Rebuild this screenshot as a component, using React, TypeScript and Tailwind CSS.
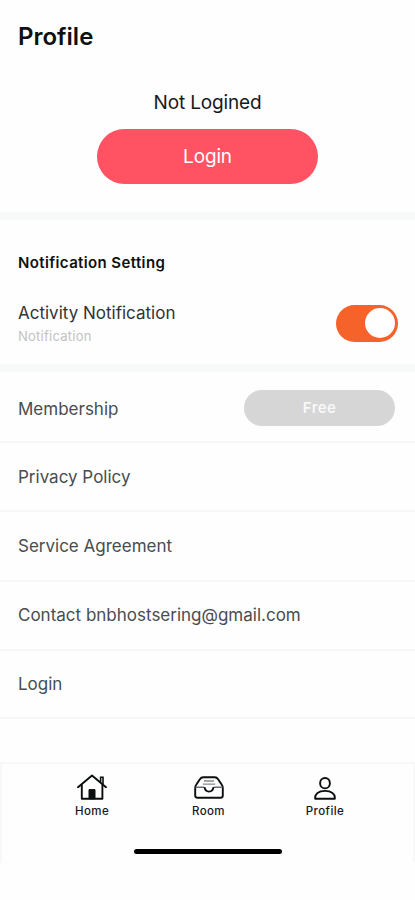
import { useState } from "react";

const HomeIcon = () => (
  <svg width="30" height="26" viewBox="0 0 30 26" fill="none" stroke="#0b0f10" strokeWidth="1.9">
    <path d="M1 13.2 15 1.4l14 11.8" strokeLinecap="round" strokeLinejoin="round" />
    <path d="M4.8 10.5v14.3h20.6V10.5" strokeLinejoin="round" />
    <path d="M23.6 8V3.2H26v7" strokeWidth="1.6" />
    <path d="M12 15.6h6v9.2h-6z" fill="#0b0f10" strokeWidth="1" />
  </svg>
);

const RoomIcon = () => (
  <svg width="30" height="24" viewBox="0 0 30 24" fill="none" stroke="#0b0f10" strokeWidth="1.9" strokeLinejoin="round">
    <path d="M1.2 12c0-1.3.3-2.200 1-3.200l3.700-5.600c.9-1.400 1.800-2 3.300-2h11.600c1.500 0 2.400.6 3.300 2l3.700 5.600c.7 1 1 1.900 1 3.200v7.500a2.200 2.200 0 0 1-2.200 2.200H3.400a2.200 2.200 0 0 1-2.200-2.200z" />
    <path d="M1.6 11.200h8.600M19.800 11.200h8.600" stroke="#6b7072" strokeWidth="1.500" />
    <path d="M10.500 11.200c.5 2.900 2.100 4.400 4.500 4.400s4-1.500 4.500-4.400" />
    <path d="M10 5h10M8.800 8.100h12.400" stroke="#85898b" strokeWidth="1.300" />
  </svg>
);

const ProfileIcon = () => (
  <svg width="22" height="23" viewBox="0 0 22 23" fill="none" stroke="#0b0f10" strokeWidth="1.9">
    <ellipse cx="11" cy="6.200" rx="4.900" ry="5.200" />
    <path d="M1.200 21.700c-.6-5 3.500-7.800 9.800-7.800s10.400 2.800 9.800 7.800z" strokeLinejoin="round" />
  </svg>
);

const links = [
  "Privacy Policy",
  "Service Agreement",
  "Contact bnbhostsering@gmail.com",
  "Login",
];

const tabs = [
  { label: "Home", icon: <HomeIcon /> },
  { label: "Room", icon: <RoomIcon /> },
  { label: "Profile", icon: <ProfileIcon /> },
];

const App = () => {
  const [enabled, setEnabled] = useState(true);

  return (
    <div className="flex h-[900px] w-[415px] flex-col bg-[#fefefe] font-['Inter',sans-serif] text-[#17191a]">
      {/* header */}
      <header className="h-[212px]">
        <h1 className="pt-[21px] pl-[18px] text-[24px] leading-8 font-semibold text-[#101010]">Profile</h1>
        <div className="mt-9 flex flex-col items-center">
          <p className="text-[19px] leading-7 tracking-[-0.15px]">Not Logined</p>
          <button className="mt-3 h-[55px] w-[221px] rounded-full bg-[#ff5263] pt-0.5 text-[19px] tracking-[-0.15px] text-white">
            Login
          </button>
        </div>
      </header>
      <div className="h-2 bg-[#f7f8f8]" />

      {/* notifications */}
      <section className="h-36 pt-[31px] pr-[17px] pl-[18px]">
        <h2 className="text-[15px] leading-6 font-semibold tracking-[0.38px] text-[#101010]">Notification Setting</h2>
        <div className="mt-[25px] flex items-center justify-between">
          <div className="pt-px">
            <p className="text-[17px] leading-6 text-[#303435]">Activity Notification</p>
            <p className="mt-px text-[13px] leading-5 tracking-[0.25px] text-[#c0c3c4]">Notification</p>
          </div>
          <button
            role="switch"
            aria-checked={enabled}
            onClick={() => setEnabled(!enabled)}
            className={`flex h-[37px] w-[62px] items-center rounded-full bg-[#f5622a] px-[3px] ${enabled ? "justify-end" : "justify-start"}`}
          >
            <span className="size-[30px] rounded-full bg-white" />
          </button>
        </div>
      </section>
      <div className="h-2 bg-[#f7f8f8]" />

      {/* menu */}
      <div className="text-[17px] text-[#474d50]">
        <div className="flex h-[71px] items-center justify-between border-b-2 border-[#f6f7f7] pt-0.5 pr-5 pl-[18px]">
          <span className="pt-1">Membership</span>
          <button className="h-9 w-[151px] rounded-full bg-[#d6d6d6] pt-0.5 text-[15px] font-semibold tracking-[0.4px] text-[#f8f8f8]">
            Free
          </button>
        </div>
        {links.map((link) => (
          <div
            key={link}
            className="flex h-[69px] items-center border-b-2 border-[#f6f7f7] pt-0.5 pl-[18px] last:h-[68px] nth-3:h-[70px] nth-4:pt-0"
          >
            {link}
          </div>
        ))}
      </div>

      {/* bottom tabs */}
      <nav className="mt-[43px] flex h-[101px] flex-col items-center border-x-2 border-t-2 border-[#f7f8f8]">
        <div className="flex w-[349px] translate-x-px justify-between pt-[9px]">
          {tabs.map((tab) => (
            <button key={tab.label} className="flex w-[116px] flex-col items-center">
              <span className="flex h-[27px] items-end">{tab.icon}</span>
              <span className="mt-[3px] text-[11.5px] leading-4 font-medium tracking-[0.4px] text-[#14181a]">{tab.label}</span>
            </button>
          ))}
        </div>
        <div className="mt-[30px] h-[5px] w-[148px] rounded-full bg-black" />
      </nav>
    </div>
  );
};

export default App;
